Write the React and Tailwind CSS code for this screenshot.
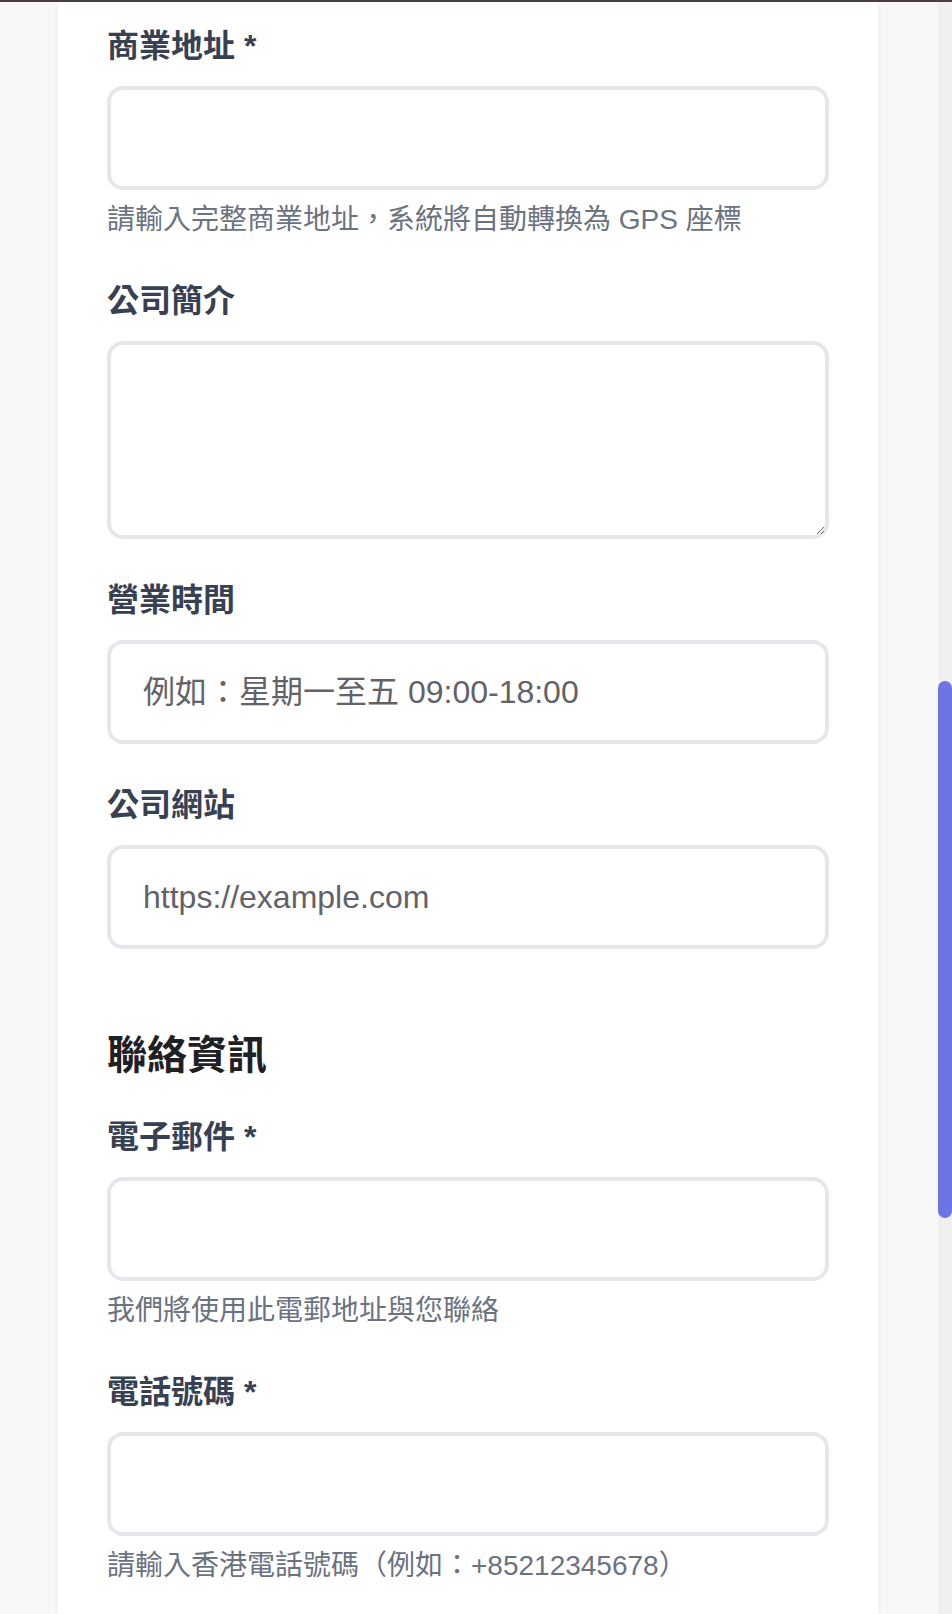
const FONT = { fontFamily: '"Liberation Sans", "Noto Sans CJK TC", sans-serif' }

function Field({ label, required, hint, placeholder, textarea, last }) {
  const box =
    'block w-full border-[4px] border-[#e5e7eb] rounded-[16px] bg-white px-[32px] text-[32px] text-gray-800 placeholder:text-[#626268] outline-none'
  return (
    <div className={last ? '' : 'mb-[37px]'}>
      <label className="block text-[32px] leading-[48px] font-bold text-[#374151] mb-[16px]">
        {label}
        {required && ' *'}
      </label>
      {textarea ? (
        <textarea className={`${box} h-[198px] py-[20px]`} />
      ) : (
        <input type="text" className={`${box} h-[104px]`} placeholder={placeholder} />
      )}
      {hint && <p className="mt-[10px] text-[28px] leading-[40px] text-[#6b7280]">{hint}</p>}
    </div>
  )
}

export default function App() {
  return (
    <div className="h-[1614px] overflow-hidden bg-[#f8f8f8] flex flex-col" style={FONT}>
      <div className="h-[2px] bg-[#4a4040] shrink-0" />
      <div className="flex flex-1">
        <div className="flex-1">
          <div className="ml-[58px] w-[820px] h-full bg-white shadow-[0_0_6px_rgba(0,0,0,0.06)] px-[49px] pt-[20px]">
            <Field label="商業地址" required hint="請輸入完整商業地址，系統將自動轉換為 GPS 座標" />
            <Field label="公司簡介" textarea />
            <Field label="營業時間" placeholder="例如：星期一至五 09:00-18:00" />
            <Field label="公司網站" placeholder="https://example.com" />

            <h2 className="mt-[78px] mb-[30px] text-[40px] leading-[56px] font-bold text-[#1f2023]">聯絡資訊</h2>

            <Field label="電子郵件" required hint="我們將使用此電郵地址與您聯絡" />
            <Field label="電話號碼" required hint="請輸入香港電話號碼（例如：+85212345678）" last />
          </div>
        </div>
        <div className="w-[14px] bg-[#f0f0f0] shrink-0">
          <div className="mt-[679px] h-[537px] rounded-full bg-[#6e73e6]" />
        </div>
      </div>
    </div>
  )
}
